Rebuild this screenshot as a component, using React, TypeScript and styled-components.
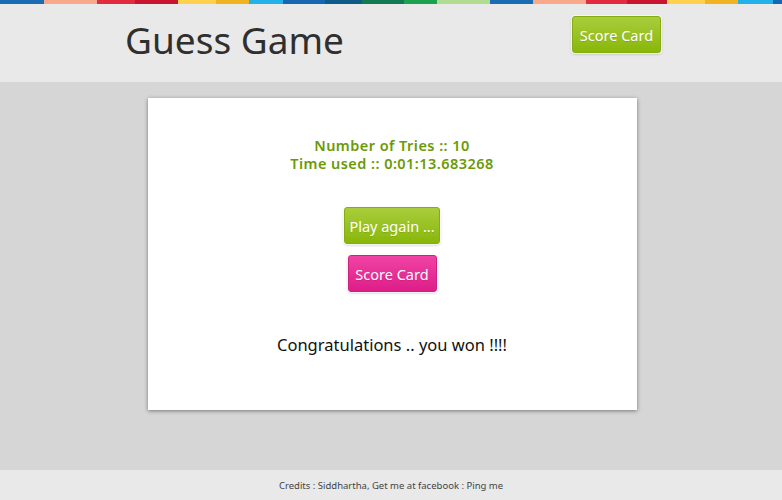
import React from "react";
import styled, { createGlobalStyle } from "styled-components";

const Global = createGlobalStyle`
  html, body { margin: 0; padding: 0; }
  body {
    font-family: "Noto Sans", "Open Sans", "DejaVu Sans", sans-serif;
    background: #d6d6d6;
  }
`;

const Page = styled.div`
  min-height: 500px;
  display: flex;
  flex-direction: column;
  background: #d6d6d6;
`;

const Stripe = styled.div`
  display: flex;
  height: 4px;
  overflow: hidden;
`;

const Segment = styled.div<{ $c: string; $w: number }>`
  flex: 0 0 ${(p) => p.$w}px;
  background: ${(p) => p.$c};
`;

const Header = styled.header`
  height: 78px;
  background: #e9e9e9;
  display: flex;
  justify-content: center;
  padding-left: 4px;
`;

const HeaderInner = styled.div`
  width: 536px;
  display: flex;
  justify-content: space-between;
  align-items: flex-start;
`;

const Title = styled.h1`
  margin: 13px 0 0;
  font-size: 37px;
  font-weight: 400;
  color: #2f2f2f;
  line-height: 46px;
`;

const Button = styled.button<{ $variant: "green" | "pink"; $w: number }>`
  font-family: inherit;
  font-size: 14.5px;
  color: #fff;
  width: ${(p) => p.$w}px;
  padding: 0;
  white-space: nowrap;
  height: 37px;
  border-radius: 3px;
  cursor: pointer;
  border: 1px solid
    ${(p) => (p.$variant === "green" ? "#86ad10" : "#cf1f80")};
  background: ${(p) =>
    p.$variant === "green"
      ? "linear-gradient(#aacd3c, #88b70a)"
      : "linear-gradient(#f043a4, #dd1e88)"};
  box-shadow: 0 0 0 1px rgba(255, 255, 255, 0.7), 0 1px 3px rgba(0, 0, 0, 0.25);
  text-shadow: 0 1px 0 rgba(0, 0, 0, 0.1);
`;

const HeaderButton = styled(Button)`
  margin-top: 12px;
`;

const Main = styled.main`
  display: flex;
  justify-content: center;
  padding: 16px 0 0 2px;
`;

const Card = styled.section`
  width: 489px;
  height: 312px;
  box-sizing: border-box;
  background: #fff;
  box-shadow: 0 1px 4px rgba(0, 0, 0, 0.45);
  display: flex;
  flex-direction: column;
  align-items: center;
  padding-top: 38px;
`;

const Stats = styled.div`
  color: #6b9a05;
  font-size: 14.5px;
  letter-spacing: 0.45px;
  font-weight: 600;
  line-height: 18px;
  text-align: center;
  margin-bottom: 35px;
`;

const StatLine = styled.div`
  white-space: nowrap;
`;

const Buttons = styled.div`
  display: flex;
  flex-direction: column;
  align-items: center;
  gap: 11px;
`;

const Message = styled.p`
  margin: 42px 0 0;
  font-size: 16.5px;
  color: #111;
  line-height: 22px;
`;

const Footer = styled.footer`
  margin-top: auto;
  height: 30px;
  background: #e9e9e9;
  display: flex;
  align-items: center;
  justify-content: center;
  font-size: 9.5px;
  color: #444;
`;

const segments: [string, number][] = [
  ["#1a6cb3", 44],
  ["#f9a88a", 53],
  ["#e42a3e", 38],
  ["#c8142f", 43],
  ["#ffd14d", 38],
  ["#f1b31f", 33],
  ["#23b1e9", 34],
  ["#1766b1", 42],
  ["#0e5a88", 37],
  ["#117a52", 42],
  ["#1ca24f", 33],
  ["#b2dc92", 53],
  ["#1a6cb3", 43],
  ["#f9a88a", 53],
  ["#e42a3e", 41],
  ["#c8142f", 40],
  ["#ffd14d", 38],
  ["#f1b31f", 33],
  ["#23b1e9", 35],
  ["#1766b1", 20],
];

export default function App() {
  return (
    <Page>
      <Global />
      <Stripe>
        {segments.map(([c, w], i) => (
          <Segment key={i} $c={c} $w={w} />
        ))}
      </Stripe>
      <Header>
        <HeaderInner>
          <Title>Guess Game</Title>
          <HeaderButton $variant="green" $w={89}>
            Score Card
          </HeaderButton>
        </HeaderInner>
      </Header>
      <Main>
        <Card>
          <Stats>
            <StatLine>Number of Tries :: 10</StatLine>
            <StatLine>Time used :: 0:01:13.683268</StatLine>
          </Stats>
          <Buttons>
            <Button $variant="green" $w={96}>
              Play again ...
            </Button>
            <Button $variant="pink" $w={89}>
              Score Card
            </Button>
          </Buttons>
          <Message>Congratulations .. you won !!!!</Message>
        </Card>
      </Main>
      <Footer>Credits : Siddhartha, Get me at facebook : Ping me</Footer>
    </Page>
  );
}
